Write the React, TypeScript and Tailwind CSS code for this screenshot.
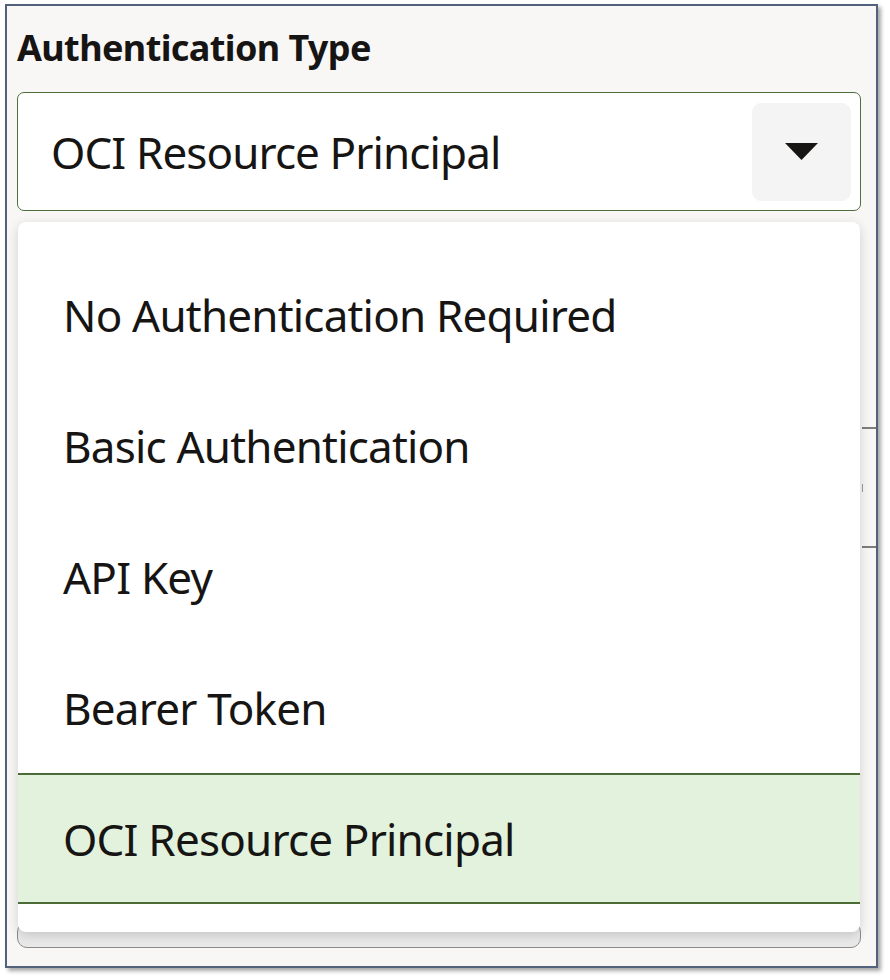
export default function App() {
  const items = [
    "No Authentication Required",
    "Basic Authentication",
    "API Key",
    "Bearer Token",
    "OCI Resource Principal",
  ];
  return (
    <div className="w-[890px] h-[980px] bg-white pt-[4px] pl-[5px] font-['Noto_Sans',sans-serif] text-[#161513]">
      <div className="relative w-[873px] h-[964px] border-2 border-[#53617d] bg-[#f8f7f6] shadow-[3px_3px_4px_rgba(0,0,0,0.35)] pt-[22px] pl-[10px] pr-[15px]">
        {/* partially visible edge of an underlying field, peeking out from behind the menu */}
        <div className="absolute left-[855px] top-[421px] w-[14px] h-[121px] border-y-2 border-[#7d7d7d] flex items-center">
          <div className="w-[1px] h-[8px] bg-[#9a9a9a]" />
        </div>

        <div className="h-[40px] flex items-center text-[36px] leading-none font-bold tracking-[-0.6px]">
          Authentication Type
        </div>

        <div className="mt-[24px] h-[119px] rounded-[7px] border-[1.5px] border-[#4f6f3f] bg-white flex items-center pl-[33px] pr-[9px]">
          <span className="flex-1 text-[44px] leading-none tracking-[-0.9px]">OCI Resource Principal</span>
          <div className="w-[99px] h-[98px] rounded-[9px] bg-[#f4f4f4] flex items-center justify-center">
            <svg width="33" height="17" viewBox="0 0 33 17">
              <path d="M0 0H33L16.5 17Z" fill="#161513" />
            </svg>
          </div>
        </div>

        <div className="relative mt-[11px]">
          <div className="absolute left-0 right-0 top-[700px] h-[26px] rounded-[10px] border-[1.5px] border-[#8a8a8a] bg-[#e9e9e9]" />
          <div className="relative z-10 mx-[1px] bg-white rounded-[8px] shadow-[0_3px_12px_rgba(0,0,0,0.16)] pt-[27px] pb-[28px]">
            {items.map((it, i) => {
              const sel = i === items.length - 1;
              return (
                <div
                  key={it}
                  className={
                    sel
                      ? "h-[131px] flex items-center pl-[45px] bg-[#e3f2dd] border-y-2 border-[#4b6b37]"
                      : "h-[131px] flex items-center pl-[45px]"
                  }
                >
                  <span className="text-[44px] leading-none tracking-[-0.8px]">{it}</span>
                </div>
              );
            })}
          </div>
        </div>
      </div>
    </div>
  );
}
